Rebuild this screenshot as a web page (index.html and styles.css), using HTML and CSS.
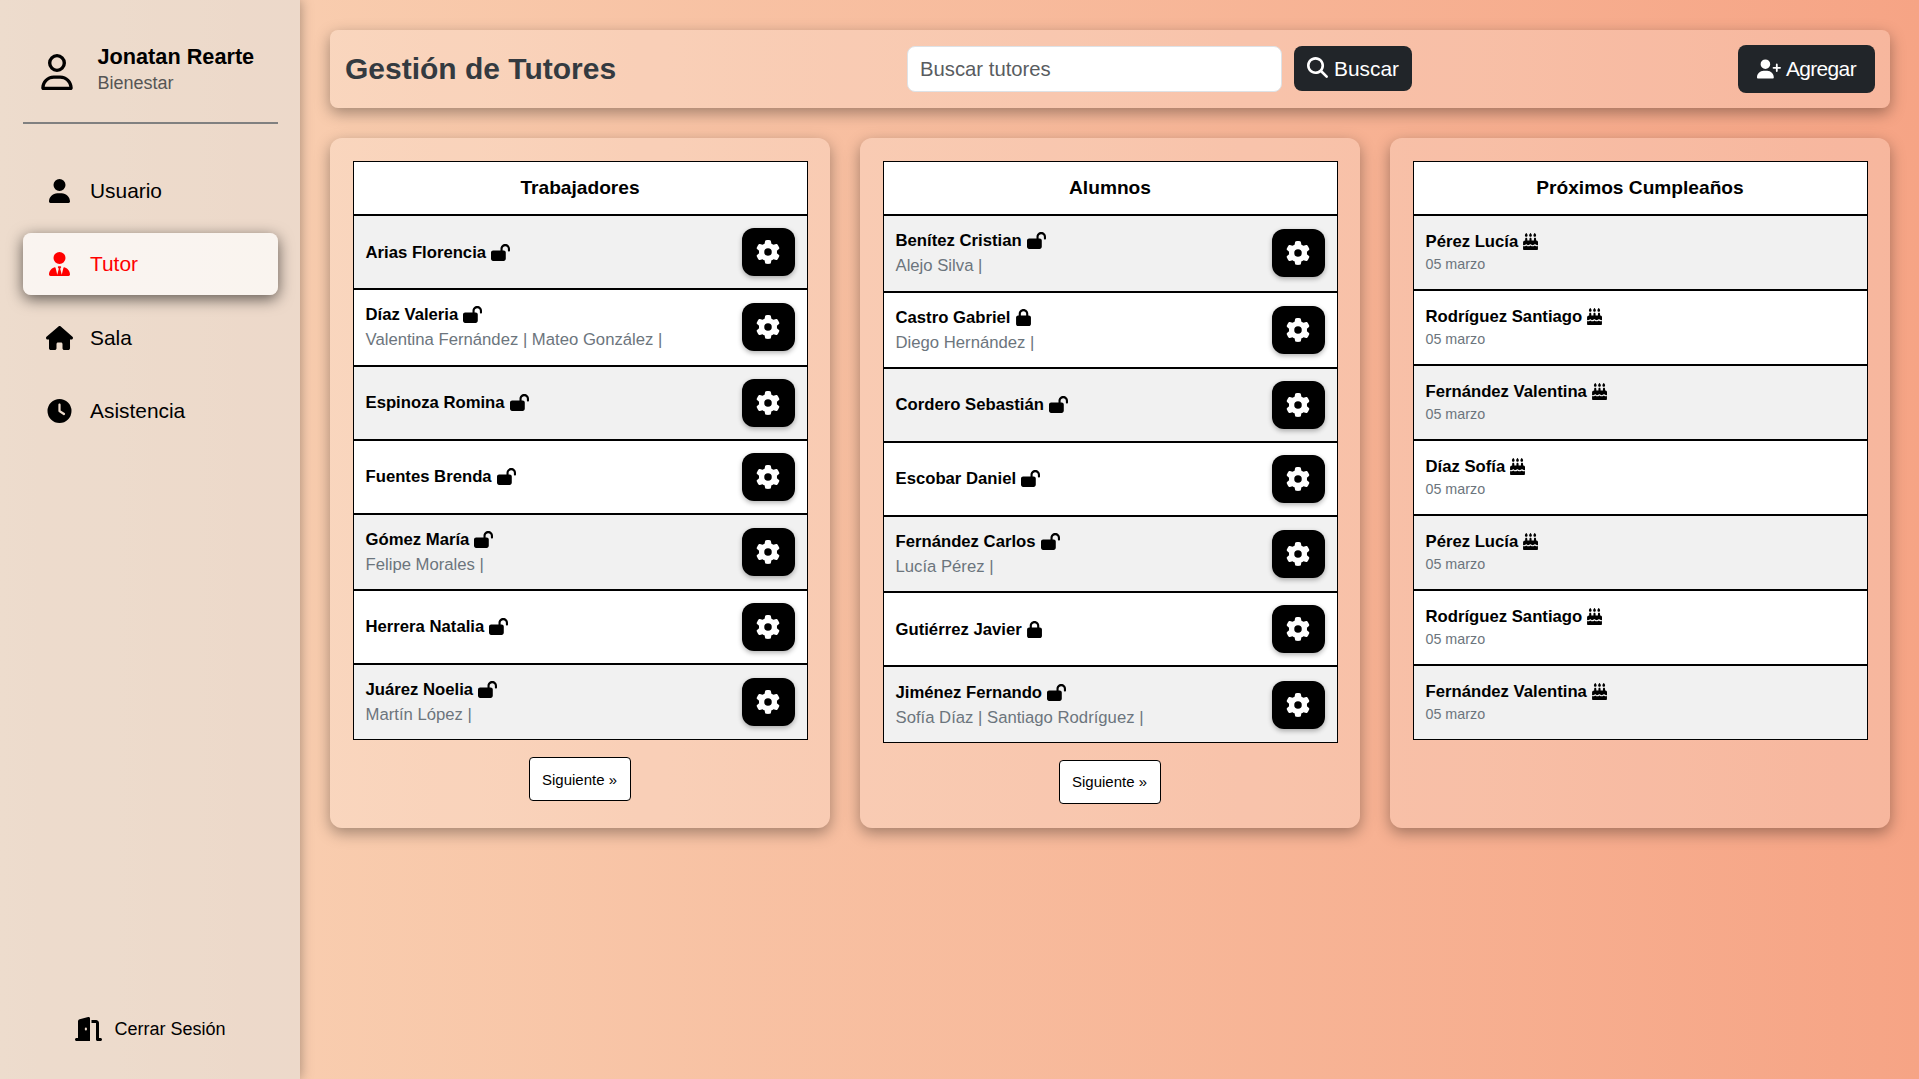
FILE: index.html
```html
<!DOCTYPE html>
<html lang="es">
<head>
<meta charset="utf-8">
<title>Gestión de Tutores</title>
<link rel="stylesheet" href="styles.css">
</head>
<body>
<svg class="defs" aria-hidden="true">
  <symbol id="user" viewBox="0 0 448 512"><path d="M224 256A128 128 0 1 0 224 0a128 128 0 1 0 0 256zm-45.700 48C79.800 304 0 383.800 0 482.300C0 498.700 13.300 512 29.700 512H418.300c16.400 0 29.700-13.300 29.700-29.700C448 383.800 368.200 304 269.700 304H178.300z"/></symbol>
  <symbol id="user-outline" viewBox="0 0 448 512"><path d="M304 128a80 80 0 1 0-160 0 80 80 0 1 0 160 0zM96 128a128 128 0 1 1 256 0A128 128 0 1 1 96 128zM49.300 464H398.700c-8.900-63.300-63.300-112-129-112H178.300c-65.700 0-120.100 48.700-129 112zM0 482.300C0 383.800 79.800 304 178.300 304h91.400C368.200 304 448 383.800 448 482.300c0 16.400-13.300 29.700-29.700 29.700H29.700C13.300 512 0 498.700 0 482.300z"/></symbol>
  <symbol id="user-tie" viewBox="0 0 448 512"><path d="M96 128a128 128 0 1 0 256 0A128 128 0 1 0 96 128zm94.500 200.200l18.600 31L175.800 483.100l-36-146.900c-2-8.100-9.800-13.400-17.900-11.300C51.900 342.400 0 405.800 0 481.300c0 17 13.800 30.700 30.700 30.700H417.300c17 0 30.700-13.800 30.700-30.700c0-75.500-51.900-138.900-121.900-156.400c-8.100-2-15.900 3.300-17.900 11.300l-36 146.900L238.900 359.200l18.600-31c6.400-10.700-1.300-24.200-13.700-24.200H204.300c-12.400 0-20.100 13.600-13.700 24.200z"/></symbol>
  <symbol id="house" viewBox="0 0 576 512"><path d="M575.800 255.500c0 18-15 32.100-32 32.100h-32l.7 160.200c0 2.700-.2 5.400-.5 8.100V472c0 22.100-17.900 40-40 40H392c-22.100 0-40-17.900-40-40V384c0-17.700-14.300-32-32-32H256c-17.700 0-32 14.300-32 32v88c0 22.100-17.900 40-40 40H104c-22.100 0-40-17.900-40-40V287.600H32c-18 0-32-14-32-32.100c0-9 3-17 10-24L266.400 8c7-7 15-8 22-8s15 2 21 7L564.800 231.500c8 7 12 15 11 24z"/></symbol>
  <symbol id="clock" viewBox="0 0 512 512"><path d="M256 0a256 256 0 1 1 0 512A256 256 0 1 1 256 0zM232 120V256c0 8 4 15.500 10.700 20l96 64c11 7.400 25.900 4.400 33.300-6.700s4.400-25.900-6.700-33.300L280 243.200V120c0-13.300-10.700-24-24-24s-24 10.700-24 24z"/></symbol>
  <symbol id="door" viewBox="0 0 576 512"><path d="M320 32c0-9.900-4.500-19.200-12.300-25.200S289.800-1.400 280.200 1l-180 45C79 51.300 64 70.500 64 92.500V448H32c-17.700 0-32 14.300-32 32s14.300 32 32 32H320V32zM256 256c0 17.700-10.700 32-24 32s-24-14.300-24-32s10.700-32 24-32s24 14.300 24 32zm96-128h96V480c0 17.700 14.300 32 32 32h64c17.700 0 32-14.300 32-32s-14.300-32-32-32H512V128c0-35.300-28.700-64-64-64H352v64z"/></symbol>
  <symbol id="search" viewBox="0 0 512 512"><path d="M416 208c0 45.900-14.900 88.300-40 122.700L502.600 457.400c12.500 12.500 12.500 32.800 0 45.300s-32.800 12.500-45.300 0L330.700 376c-34.400 25.200-76.800 40-122.700 40C93.100 416 0 322.900 0 208S93.100 0 208 0S416 93.100 416 208zM208 352a144 144 0 1 0 0-288 144 144 0 1 0 0 288z"/></symbol>
  <symbol id="user-plus" viewBox="0 0 640 512"><path d="M96 128a128 128 0 1 1 256 0A128 128 0 1 1 96 128zM0 482.300C0 383.800 79.800 304 178.300 304h91.400C368.200 304 448 383.800 448 482.300c0 16.400-13.300 29.700-29.700 29.700H29.700C13.300 512 0 498.700 0 482.300zM504 312V248H440c-13.300 0-24-10.700-24-24s10.700-24 24-24h64V136c0-13.300 10.700-24 24-24s24 10.700 24 24v64h64c13.300 0 24 10.700 24 24s-10.700 24-24 24H552v64c0 13.300-10.700 24-24 24s-24-10.700-24-24z"/></symbol>
  <symbol id="unlock" viewBox="0 0 576 512"><path d="M352 144c0-44.200 35.800-80 80-80s80 35.800 80 80v48c0 17.700 14.300 32 32 32s32-14.300 32-32V144C576 64.500 511.500 0 432 0S288 64.500 288 144v48H64c-35.300 0-64 28.700-64 64V448c0 35.300 28.700 64 64 64H384c35.300 0 64-28.700 64-64V256c0-35.300-28.700-64-64-64H352V144z"/></symbol>
  <symbol id="lock" viewBox="0 0 448 512"><path d="M144 144v48H304V144c0-44.200-35.800-80-80-80s-80 35.800-80 80zM80 192V144C80 64.500 144.500 0 224 0s144 64.500 144 144v48h16c35.300 0 64 28.700 64 64V448c0 35.300-28.700 64-64 64H64c-35.300 0-64-28.700-64-64V256c0-35.300 28.700-64 64-64H80z"/></symbol>
  <symbol id="gear" viewBox="0 0 512 512"><path d="M495.900 166.600c3.200 8.700 .5 18.400-6.400 24.600l-43.300 39.400c1.100 8.300 1.700 16.800 1.700 25.400s-.6 17.100-1.700 25.400l43.300 39.400c6.900 6.200 9.600 15.900 6.400 24.600c-4.400 11.900-9.700 23.300-15.800 34.300l-4.700 8.100c-6.600 11-14 21.400-22.100 31.200c-5.900 7.200-15.700 9.600-24.500 6.800l-55.700-17.700c-13.400 10.300-28.200 18.900-44 25.400l-12.500 57.100c-2 9.100-9 16.300-18.200 17.800c-13.800 2.300-28 3.500-42.500 3.500s-28.700-1.200-42.500-3.500c-9.200-1.500-16.200-8.700-18.200-17.800l-12.500-57.100c-15.800-6.500-30.600-15.100-44-25.400L83.100 425.900c-8.800 2.800-18.600 .3-24.500-6.800c-8.100-9.800-15.500-20.200-22.100-31.200l-4.700-8.100c-6.100-11-11.400-22.400-15.800-34.300c-3.200-8.700-.5-18.400 6.400-24.600l43.300-39.400C64.600 273.100 64 264.600 64 256s.6-17.100 1.700-25.400L22.400 191.200c-6.900-6.200-9.600-15.900-6.400-24.600c4.400-11.900 9.700-23.300 15.800-34.300l4.700-8.100c6.600-11 14-21.400 22.100-31.200c5.900-7.200 15.700-9.600 24.500-6.800l55.700 17.700c13.400-10.300 28.200-18.900 44-25.400l12.500-57.100c2-9.100 9-16.300 18.200-17.800C227.300 1.200 241.500 0 256 0s28.700 1.200 42.500 3.500c9.200 1.500 16.200 8.700 18.200 17.800l12.500 57.100c15.800 6.500 30.600 15.100 44 25.400l55.700-17.700c8.800-2.800 18.600-.3 24.500 6.800c8.100 9.800 15.500 20.200 22.100 31.200l4.700 8.100c6.100 11 11.400 22.400 15.800 34.300zM256 336a80 80 0 1 0 0-160 80 80 0 1 0 0 160z"/></symbol>
  <symbol id="cake" viewBox="0 0 448 512"><path d="M86.400 5.500L61.800 47.600C58 54.100 56 61.600 56 69.200V72c0 22.100 17.900 40 40 40s40-17.900 40-40V69.200c0-7.600-2-15-5.800-21.600L105.600 5.500C103.600 2.100 100 0 96 0s-7.600 2.100-9.600 5.500zm128 0L189.800 47.600c-3.800 6.500-5.800 14-5.800 21.600V72c0 22.100 17.900 40 40 40s40-17.900 40-40V69.200c0-7.600-2-15-5.800-21.600L233.600 5.500C231.600 2.100 228 0 224 0s-7.600 2.100-9.600 5.500zM317.800 47.600c-3.800 6.500-5.800 14-5.800 21.600V72c0 22.100 17.900 40 40 40s40-17.900 40-40V69.200c0-7.600-2-15-5.800-21.600L361.600 5.500C359.600 2.100 356 0 352 0s-7.600 2.100-9.600 5.500L317.800 47.600zM128 176c0-17.700-14.300-32-32-32s-32 14.300-32 32v48c-35.300 0-64 28.700-64 64v71c8.300 5.200 18.100 9 28.800 9c13.500 0 27.200-6.100 38.400-13.400c5.400-3.500 9.900-7.100 13-9.700c1.500-1.300 2.700-2.400 3.500-3.100c.4-.4 .7-.6 .8-.8l.1-.1c3.100-3.200 7.400-4.900 11.900-4.800s8.600 2.100 11.600 5.400l.1 .1c1.400 1.500 13 15.500 34 26.400c13.500 0 36-8 70-26.400c3-3.400 7.400-5.400 12-5.400s9 2 12 5.400c1.400 1.500 28 26.400 56 26.400c19 0 39-15 56-26.400c6-6.700 18-7.400 23.500-.6c13 12 30 27 56 27c10 0 20-4 28-9V288c0-35.300-28.700-64-64-64V176c0-17.700-14.300-32-32-32s-32 14.300-32 32v48H256V176c0-17.700-14.300-32-32-32s-32 14.300-32 32v48H128V176zM448 394.600c-8.500 3.300-18.200 5.400-28.800 5.400c-22.500 0-42.400-9.900-55.800-18.600c-4.100-2.700-7.800-5.400-10.900-7.800c-2.800 2.400-6.100 5-9.800 7.500C329.800 390 310.600 400 288 400s-41.800-10-54.600-18.900c-3.500-2.400-6.700-4.900-9.400-7.200c-2.700 2.300-5.900 4.700-9.400 7.200C201.800 390 182.600 400 160 400s-41.800-10-54.600-18.900c-3.700-2.600-7-5.200-9.800-7.500c-3.100 2.400-6.800 5.100-10.900 7.800C71.200 390.100 51.300 400 28.800 400c-10.600 0-20.300-2.200-28.800-5.400V480c0 17.700 14.300 32 32 32H416c17.700 0 32-14.300 32-32V394.600z"/></symbol>
</svg>
<div class="layout">
  <aside class="sidebar">
    <div class="profile">
      <svg class="profile-icon"><use href="#user-outline"/></svg>
      <div class="profile-text"><strong>Jonatan Rearte</strong><span>Bienestar</span></div>
    </div>
    <nav class="menu">
      <a class="menu-item"><svg><use href="#user"/></svg>Usuario</a>
      <a class="menu-item active"><svg><use href="#user-tie"/></svg>Tutor</a>
      <a class="menu-item"><svg><use href="#house"/></svg>Sala</a>
      <a class="menu-item"><svg><use href="#clock"/></svg>Asistencia</a>
    </nav>
    <a class="logout"><svg><use href="#door"/></svg>Cerrar Sesión</a>
  </aside>
  <main class="content">
    <header class="topbar">
      <h1>Gestión de Tutores</h1>
      <form class="search">
        <input type="text" placeholder="Buscar tutores">
        <button type="button" class="btn"><svg class="search-icon"><use href="#search"/></svg>Buscar</button>
      </form>
      <button type="button" class="btn btn-add"><svg class="add-icon"><use href="#user-plus"/></svg>Agregar</button>
    </header>
    <section class="cards">
      <article class="card">
        <h2>Trabajadores</h2>
        <ul class="list">
          <li><div><b>Arias Florencia<svg class="unlock"><use href="#unlock"/></svg></b></div><button class="gear"><svg><use href="#gear"/></svg></button></li>
          <li class="double"><div><b>Díaz Valeria<svg class="unlock"><use href="#unlock"/></svg></b><span>Valentina Fernández | Mateo González |</span></div><button class="gear"><svg><use href="#gear"/></svg></button></li>
          <li><div><b>Espinoza Romina<svg class="unlock"><use href="#unlock"/></svg></b></div><button class="gear"><svg><use href="#gear"/></svg></button></li>
          <li><div><b>Fuentes Brenda<svg class="unlock"><use href="#unlock"/></svg></b></div><button class="gear"><svg><use href="#gear"/></svg></button></li>
          <li class="double"><div><b>Gómez María<svg class="unlock"><use href="#unlock"/></svg></b><span>Felipe Morales |</span></div><button class="gear"><svg><use href="#gear"/></svg></button></li>
          <li><div><b>Herrera Natalia<svg class="unlock"><use href="#unlock"/></svg></b></div><button class="gear"><svg><use href="#gear"/></svg></button></li>
          <li class="double"><div><b>Juárez Noelia<svg class="unlock"><use href="#unlock"/></svg></b><span>Martín López |</span></div><button class="gear"><svg><use href="#gear"/></svg></button></li>
        </ul>
        <button class="next">Siguiente »</button>
      </article>
      <article class="card">
        <h2>Alumnos</h2>
        <ul class="list">
          <li class="double"><div><b>Benítez Cristian<svg class="unlock"><use href="#unlock"/></svg></b><span>Alejo Silva |</span></div><button class="gear"><svg><use href="#gear"/></svg></button></li>
          <li class="double"><div><b>Castro Gabriel<svg class="lock"><use href="#lock"/></svg></b><span>Diego Hernández |</span></div><button class="gear"><svg><use href="#gear"/></svg></button></li>
          <li><div><b>Cordero Sebastián<svg class="unlock"><use href="#unlock"/></svg></b></div><button class="gear"><svg><use href="#gear"/></svg></button></li>
          <li><div><b>Escobar Daniel<svg class="unlock"><use href="#unlock"/></svg></b></div><button class="gear"><svg><use href="#gear"/></svg></button></li>
          <li class="double"><div><b>Fernández Carlos<svg class="unlock"><use href="#unlock"/></svg></b><span>Lucía Pérez |</span></div><button class="gear"><svg><use href="#gear"/></svg></button></li>
          <li><div><b>Gutiérrez Javier<svg class="lock"><use href="#lock"/></svg></b></div><button class="gear"><svg><use href="#gear"/></svg></button></li>
          <li class="double"><div><b>Jiménez Fernando<svg class="unlock"><use href="#unlock"/></svg></b><span>Sofía Díaz | Santiago Rodríguez |</span></div><button class="gear"><svg><use href="#gear"/></svg></button></li>
        </ul>
        <button class="next">Siguiente »</button>
      </article>
      <article class="card birthdays">
        <h2>Próximos Cumpleaños</h2>
        <ul class="list">
          <li><div><b>Pérez Lucía<svg class="lock"><use href="#cake"/></svg></b><span>05 marzo</span></div></li>
          <li><div><b>Rodríguez Santiago<svg class="lock"><use href="#cake"/></svg></b><span>05 marzo</span></div></li>
          <li><div><b>Fernández Valentina<svg class="lock"><use href="#cake"/></svg></b><span>05 marzo</span></div></li>
          <li><div><b>Díaz Sofía<svg class="lock"><use href="#cake"/></svg></b><span>05 marzo</span></div></li>
          <li><div><b>Pérez Lucía<svg class="lock"><use href="#cake"/></svg></b><span>05 marzo</span></div></li>
          <li><div><b>Rodríguez Santiago<svg class="lock"><use href="#cake"/></svg></b><span>05 marzo</span></div></li>
          <li><div><b>Fernández Valentina<svg class="lock"><use href="#cake"/></svg></b><span>05 marzo</span></div></li>
        </ul>
      </article>
    </section>
  </main>
</div>
</body>
</html>
```

FILE: styles.css
```css
* { box-sizing: border-box; }
body {
  margin: 0;
  font-family: "Liberation Sans", Arial, sans-serif;
  font-size: 16.700px;
  color: #000;
  background: linear-gradient(to right, #f9d4b6, #f6a485);
}
button, input { font-family: inherit; }
svg { fill: currentColor; flex: none; }
.defs { display: none; }
.layout { display: flex; height: 1079px; overflow: hidden; }

.sidebar {
  width: 300px;
  flex: none;
  display: flex;
  flex-direction: column;
  padding: 0 22px 0 23px;
  background: rgba(229, 225, 220, .6);
  box-shadow: 0 0 12px rgba(0, 0, 0, .35);
}
.profile {
  display: flex;
  align-items: center;
  height: 124px;
  padding: 20px 0 0 18px;
  border-bottom: 2px solid #808080;
}
.profile-icon { width: 32px; height: 36px; margin-right: 24.500px; margin-top: 1px; }
.profile-text { display: flex; flex-direction: column; line-height: 27.500px; margin-bottom: 2px; }
.profile-text strong { font-size: 21.700px; }
.profile-text span { font-size: 18px; color: #555; }
.menu { display: flex; flex-direction: column; gap: 11.500px; margin-top: 35.700px; }
.menu-item {
  display: flex;
  align-items: center;
  height: 62px;
  padding-left: 23px;
  border-radius: 8px;
  font-size: 20.900px;
}
.menu-item svg { width: 27px; height: 24px; margin-right: 17px; }
.menu-item.active {
  color: #f00;
  background: rgba(255, 255, 255, .7);
  box-shadow: 0 4px 15px rgba(0, 0, 0, .6);
}
.logout {
  display: flex;
  align-items: center;
  justify-content: center;
  margin-top: auto;
  margin-bottom: 38px;
  font-size: 18px;
}
.logout svg { width: 27px; height: 24px; margin-right: 12px; }

.content { flex: 1; padding: 30px 29px 0 30px; }
.topbar {
  display: flex;
  align-items: center;
  justify-content: space-between;
  height: 78px;
  padding: 0 15px;
  border-radius: 8px;
  background: rgba(255, 255, 255, .2);
  box-shadow: 0 5px 15px rgba(0, 0, 0, .35);
}
h1 { margin: 0; width: 562px; font-size: 30px; color: #343a40; }
.search { display: flex; gap: 12px; margin-right: auto; }
.search input {
  width: 375px;
  height: 46px;
  padding: 0 12px;
  border: 1px solid #dee2e6;
  border-radius: 8px;
  font-size: 20.300px;
}
.search input::placeholder { color: #595c5f; }
.btn {
  display: flex;
  align-items: center;
  height: 45px;
  padding: 0 13px;
  border: 0;
  border-radius: 8px;
  background: #212529;
  color: #fff;
  font-size: 20.900px;
}
.search-icon { width: 21px; height: 21px; margin: 0 6px 2px 0; }
.btn-add { height: 48px; padding: 0 19px; letter-spacing: -.600px; }
.add-icon { width: 24px; height: 20px; margin-right: 5px; }

.cards { display: grid; grid-template-columns: repeat(3, 1fr); gap: 30px; margin-top: 30px; }
.card {
  display: flex;
  flex-direction: column;
  height: 690px;
  padding: 23px 22px 0 23px;
  border-radius: 12px;
  background: rgba(255, 255, 255, .2);
  box-shadow: 0 5px 15px rgba(0, 0, 0, .35);
}
h2 {
  display: flex;
  align-items: center;
  justify-content: center;
  height: 54.200px;
  margin: 0;
  padding-right: 1px;
  border: 1px solid #000;
  background: #fff;
  font-size: 19.150px;
}
.list { list-style: none; margin: 0; padding: 0; }
.list li {
  display: flex;
  align-items: center;
  justify-content: space-between;
  height: 74px;
  padding: 0 12px 0 11.500px;
  border: 1px solid #000;
  background: #fff;
}
.list li:nth-child(odd) { background: #f1f1f1; }
.list li.double { height: 76.400px; }
.list div { display: flex; flex-direction: column; line-height: 25px; }
.list b { display: flex; align-items: center; }
.list span { color: #6c757d; }
.unlock { width: 19px; height: 17px; margin-left: 5px; }
.lock { width: 15px; height: 17px; margin-left: 5px; }
.gear {
  display: flex;
  align-items: center;
  justify-content: center;
  width: 53px;
  height: 48px;
  padding: 0 1px 0 0;
  border: 0;
  border-radius: 12px;
  background: #000;
  color: #fff;
  box-shadow: 0 2px 5px rgba(0, 0, 0, .3);
}
.gear svg { width: 24px; height: 24px; }
.next {
  align-self: center;
  width: 102px;
  height: 44px;
  margin: 17px 2px 0 0;
  padding: 0;
  border: 1px solid #000;
  border-radius: 4px;
  background: #fff;
  color: #000;
  font-size: 15px;
}
.birthdays .list li { height: 75px; padding-top: 1px; }
.birthdays .list div { line-height: 23.500px; }
.birthdays .list span { font-size: 14.300px; }
```
